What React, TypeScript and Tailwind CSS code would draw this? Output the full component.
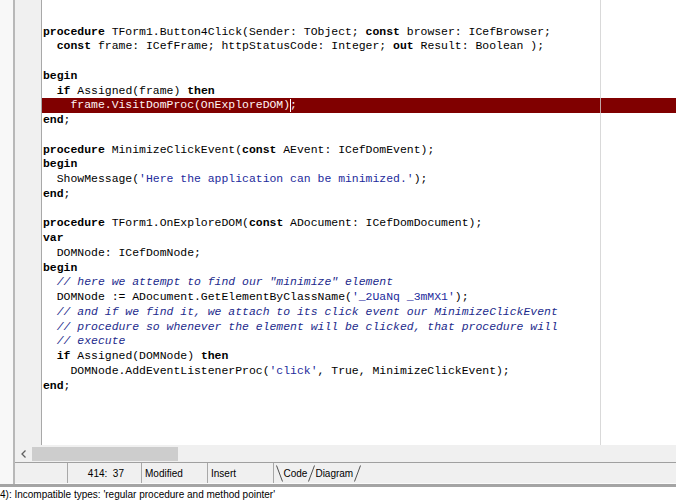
import React from "react";

const LINES: string[] = [
  "procedure TForm1.Button4Click(Sender: TObject; const browser: ICefBrowser;",
  "  const frame: ICefFrame; httpStatusCode: Integer; out Result: Boolean );",
  "",
  "begin",
  "  if Assigned(frame) then",
  "    frame.VisitDomProc(OnExploreDOM);",
  "end;",
  "",
  "procedure MinimizeClickEvent(const AEvent: ICefDomEvent);",
  "begin",
  "  ShowMessage('Here the application can be minimized.');",
  "end;",
  "",
  "procedure TForm1.OnExploreDOM(const ADocument: ICefDomDocument);",
  "var",
  "  DOMNode: ICefDomNode;",
  "begin",
  '  // here we attempt to find our "minimize" element',
  "  DOMNode := ADocument.GetElementByClassName('_2UaNq _3mMX1');",
  "  // and if we find it, we attach to its click event our MinimizeClickEvent",
  "  // procedure so whenever the element will be clicked, that procedure will",
  "  // execute",
  "  if Assigned(DOMNode) then",
  "    DOMNode.AddEventListenerProc('click', True, MinimizeClickEvent);",
  "end;",
];

const KW = /('[^']*'|\b(?:procedure|const|begin|end|if|then|var|out)\b)/;

function renderLine(line: string, highlight: boolean): React.ReactNode {
  const ci = line.indexOf("//");
  if (ci >= 0) {
    return (
      <>
        {line.slice(0, ci)}
        <span className="italic text-[#1c2a8c]">{line.slice(ci)}</span>
      </>
    );
  }
  const parts = line.split(KW);
  return parts.map((p, i) => {
    if (i % 2 === 1) {
      if (p.startsWith("'")) {
        return (
          <span key={i} className={highlight ? "" : "text-[#1c2a9c]"}>
            {p}
          </span>
        );
      }
      return (
        <span key={i} className="font-bold">
          {p}
        </span>
      );
    }
    return <React.Fragment key={i}>{p}</React.Fragment>;
  });
}

function Slash({ back }: { back?: boolean }) {
  return (
    <svg width="7" height="17" viewBox="0 0 7 17" className="shrink-0">
      {back ? (
        <line x1="0.5" y1="0.5" x2="6.5" y2="16.5" stroke="#505050" strokeWidth="1" />
      ) : (
        <line x1="0.5" y1="16.5" x2="6.5" y2="0.5" stroke="#505050" strokeWidth="1" />
      )}
    </svg>
  );
}

export default function App() {
  return (
    <div
      className="w-[676px] h-[502px] flex flex-col bg-white overflow-hidden text-black"
      style={{ fontFamily: '"Liberation Sans", Arial, sans-serif' }}
    >
      <div className="flex h-[484px]">
        {/* left strip */}
        <div className="w-[15px] shrink-0 bg-[#f8f8f8] border-r-2 border-[#b8b8b8]" />
        <div className="flex-1 flex flex-col min-w-0">
          {/* editor */}
          <div className="flex h-[445px]">
            <div className="w-[27px] shrink-0 bg-[#f0f0f0] border-r border-[#a8a8a8]" />
            <div className="relative flex-1 bg-white overflow-hidden">
              <div
                className="pt-[24.6px] text-[11.45px] leading-[14.75px] whitespace-pre"
                style={{ fontFamily: '"Liberation Mono", "Courier New", monospace' }}
              >
                {LINES.map((l, i) => {
                  const hl = i === 5;
                  return (
                    <div
                      key={i}
                      className={
                        hl
                          ? "relative h-[14.75px] pl-[1px] bg-[#800000] text-[#fff4f4]"
                          : "h-[14.75px] pl-[1px]"
                      }
                    >
                      {renderLine(l, hl)}
                      {hl && (
                        <span className="absolute left-[247.5px] top-[1px] h-[13px] w-px bg-white" />
                      )}
                    </div>
                  );
                })}
              </div>
              {/* right margin line */}
              <div className="absolute top-0 bottom-0 left-[558px] w-px bg-[#cfcfcf]/80" />
            </div>
          </div>
          {/* horizontal scrollbar */}
          <div className="h-[17px] bg-[#f0f0f0] flex items-center">
            <div className="w-[17px] h-full flex items-center justify-center">
              <svg width="5" height="8" viewBox="0 0 5 8">
                <path d="M4.5 0.5 L1 4 L4.5 7.5" fill="none" stroke="#606060" strokeWidth="1.3" />
              </svg>
            </div>
            <div className="w-[146px] h-[14px] bg-[#cdcdcd]" />
          </div>
          {/* status bar */}
          <div className="h-[22px] bg-[#f0f0f0] border-t border-[#a0a0a0] border-b border-b-[#fafafa] flex items-center text-[10px]">
            <div className="w-[53px] h-full border-r border-[#a8a8a8]" />
            <div className="w-[74px] h-full border-r border-[#a8a8a8] flex items-center justify-end pr-[17px]">
              414:&nbsp;&nbsp;37
            </div>
            <div className="w-[66px] h-full border-r border-[#a8a8a8] flex items-center pl-[3px]">
              Modified
            </div>
            <div className="w-[66px] h-full border-r border-[#a8a8a8] flex items-center pl-[3px]">
              Insert
            </div>
            <div className="flex items-center h-full pl-[2px]">
              <Slash back />
              <span className="px-[0.5px]">Code</span>
              <Slash />
              <span className="px-[0.5px]">Diagram</span>
              <Slash />
            </div>
          </div>
        </div>
      </div>
      <div className="h-[3px] bg-[#a4a4a4]" />
      <div className="flex-1 bg-white text-[10px] leading-[14px] pt-[1px] whitespace-pre">
        4): Incompatible types: 'regular procedure and method pointer'
      </div>
    </div>
  );
}
